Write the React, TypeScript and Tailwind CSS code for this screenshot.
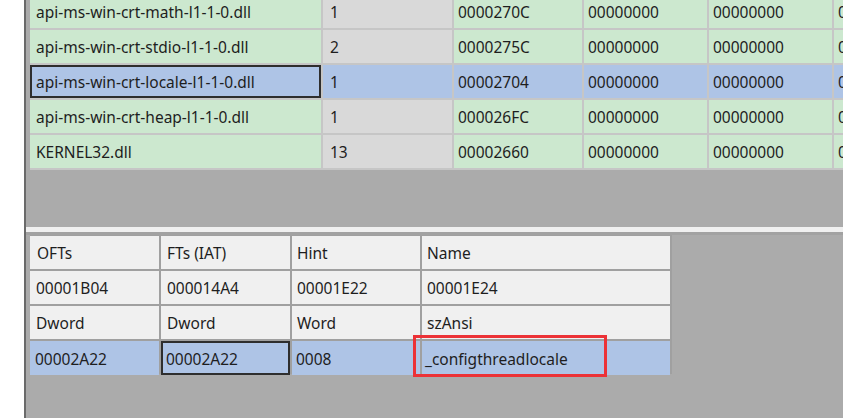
import React from "react";

const topRows = [
  { name: "api-ms-win-crt-math-l1-1-0.dll", n: "1", a: "0000270C", sel: false },
  { name: "api-ms-win-crt-stdio-l1-1-0.dll", n: "2", a: "0000275C", sel: false },
  { name: "api-ms-win-crt-locale-l1-1-0.dll", n: "1", a: "00002704", sel: true },
  { name: "api-ms-win-crt-heap-l1-1-0.dll", n: "1", a: "000026FC", sel: false },
  { name: "KERNEL32.dll", n: "13", a: "00002660", sel: false },
];

const cellBase = "flex items-center whitespace-nowrap overflow-hidden pt-[3px]";

export default function App() {
  return (
    <div className="relative flex h-[418px] w-[843px] overflow-hidden bg-white text-[15.5px] text-[#1e1e1e] font-['Noto_Sans','Liberation_Sans',sans-serif]">
      <div className="w-[24px] shrink-0 bg-white" />
      <div className="flex min-w-0 flex-1 flex-col border-l-2 border-[#6a6a6a] bg-[#ababab]">
        {/* top table */}
        <div className="h-[170px] shrink-0 overflow-hidden pl-[4px]">
          <div className="-mt-[5px] grid grid-cols-[291px_129px_128px_123px_123px_1fr] auto-rows-[33px] gap-[2px] bg-[#c6c6c6] pb-[2px]">
            {topRows.map((r, i) => (
              <React.Fragment key={i}>
                <div
                  className={`${cellBase} ${
                    r.sel ? "bg-[#aec4e6] border-2 border-[#2e2e2e] pl-[4px]" : "bg-[#cce8cf] pl-[6px]"
                  }`}
                >
                  {r.name}
                </div>
                <div className={`${cellBase} pl-[7px] ${r.sel ? "bg-[#aec4e6]" : "bg-[#d9d9d9]"}`}>{r.n}</div>
                <div className={`${cellBase} pl-[4px] ${r.sel ? "bg-[#aec4e6]" : "bg-[#cce8cf]"}`}>{r.a}</div>
                <div className={`${cellBase} pl-[4px] ${r.sel ? "bg-[#aec4e6]" : "bg-[#cce8cf]"}`}>00000000</div>
                <div className={`${cellBase} pl-[4px] ${r.sel ? "bg-[#aec4e6]" : "bg-[#cce8cf]"}`}>00000000</div>
                <div className={`${cellBase} pl-[4px] ${r.sel ? "bg-[#aec4e6]" : "bg-[#cce8cf]"}`}>00000000</div>
              </React.Fragment>
            ))}
          </div>
        </div>
        {/* gray gap */}
        <div className="h-[57px] shrink-0" />
        {/* splitter */}
        <div className="h-[5px] shrink-0 bg-[#f0f0f0]" />
        <div className="h-[3px] shrink-0 bg-[#a2a2a2]" />
        {/* bottom table */}
        <div className="flex pl-[4px]">
          <div className="grid grid-cols-[129px_129px_128px_248px] auto-rows-[33px] gap-[2px] bg-[#a0a0a0] pt-[1px] pr-[2px]">
            <div className={`${cellBase} bg-[#f0f0f0] pl-[7px]`}>OFTs</div>
            <div className={`${cellBase} bg-[#f0f0f0] pl-[6px]`}>FTs (IAT)</div>
            <div className={`${cellBase} bg-[#f0f0f0] pl-[5px]`}>Hint</div>
            <div className={`${cellBase} bg-[#f0f0f0] pl-[5px]`}>Name</div>

            <div className={`${cellBase} bg-[#f0f0f0] pl-[6px]`}>00001B04</div>
            <div className={`${cellBase} bg-[#f0f0f0] pl-[6px]`}>000014A4</div>
            <div className={`${cellBase} bg-[#f0f0f0] pl-[5px]`}>00001E22</div>
            <div className={`${cellBase} bg-[#f0f0f0] pl-[5px]`}>00001E24</div>

            <div className={`${cellBase} bg-[#f0f0f0] pl-[6px]`}>Dword</div>
            <div className={`${cellBase} bg-[#f0f0f0] pl-[6px]`}>Dword</div>
            <div className={`${cellBase} bg-[#f0f0f0] pl-[5px]`}>Word</div>
            <div className={`${cellBase} bg-[#f0f0f0] pl-[5px]`}>szAnsi</div>

            <div className={`${cellBase} h-[34px] bg-[#aec4e6] pl-[5px]`}>00002A22</div>
            <div className={`${cellBase} h-[34px] border-2 border-[#2e2e2e] bg-[#aec4e6] pl-[3px]`}>00002A22</div>
            <div className={`${cellBase} h-[34px] bg-[#aec4e6] pl-[4px]`}>0008</div>
            <div className={`${cellBase} h-[34px] bg-[#aec4e6] pl-[3px]`}>_configthreadlocale</div>
          </div>
        </div>
        <div className="flex-1" />
      </div>
      {/* red highlight box */}
      <div className="pointer-events-none absolute left-[413px] top-[335px] h-[42px] w-[194px] border-[3px] border-[#ec3237]" />
    </div>
  );
}
